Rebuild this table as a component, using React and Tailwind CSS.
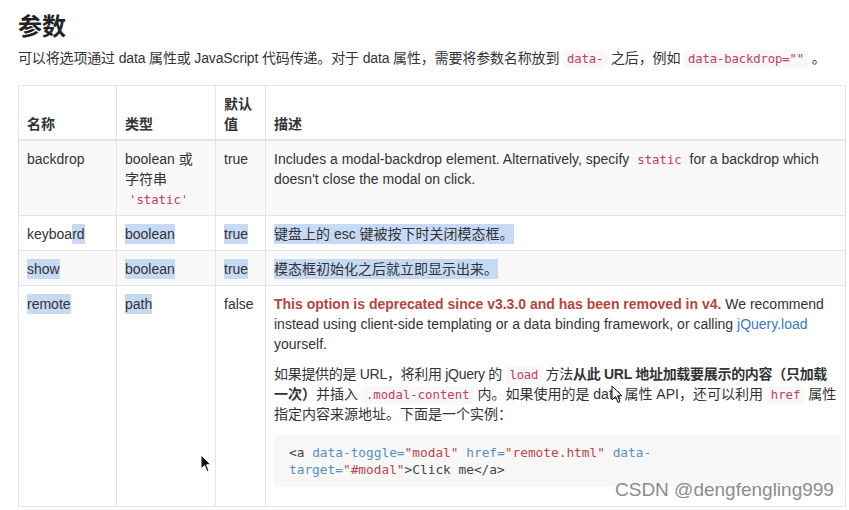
import React from 'react';

const sans = { fontFamily: '"Liberation Sans", "Noto Sans CJK SC", sans-serif' };
const mono = { fontFamily: '"DejaVu Sans Mono", "Liberation Mono", monospace' };

function Code({ children }) {
  return (
    <code style={mono} className="rounded-[3px] bg-[#f9f7f8] px-[4px] py-[2px] text-[12.3px] text-[#c2405e]">
      {children}
    </code>
  );
}

function Hl({ children }) {
  return <span className="bg-[#c6daf5] py-[2px]">{children}</span>;
}

// one text line with a fixed height, so fallback fonts can't grow the row
function Line({ children, className = '' }) {
  return <div className={`h-5 whitespace-nowrap ${className}`}>{children}</div>;
}

function Cursor({ className, filled }) {
  return (
    <svg className={className} width="12" height="19" viewBox="0 0 12 19">
      <path
        d="M1 1 L1 15 L4.5 11.5 L7 17.5 L9 16.6 L6.6 10.8 L11 10.8 Z"
        fill={filled ? '#111' : '#fff'}
        stroke={filled ? '#fff' : '#111'}
        strokeWidth="1"
        strokeLinejoin="round"
      />
    </svg>
  );
}

export default function App() {
  const td = 'border border-[#e4e4e4] px-2 pt-2 pb-[6px] align-top';
  const th = 'border border-[#e4e4e4] border-b-2 px-2 pt-2 pb-[5px] align-bottom text-left font-bold';
  const attr = 'text-[#5b8fbd]';
  const str = 'text-[#bd444c]';

  return (
    <div style={sans} className="relative h-[510px] w-[849px] overflow-hidden bg-white pl-[18px] text-[14px] leading-[20px] text-[#333]">
      <h2 className="mt-[13px] h-[28px] text-[24px] font-bold leading-[28px] text-[#222]">参数</h2>
      <Line className="mt-[7px] mb-[17px] tracking-[-0.15px]">
        可以将选项通过 data 属性或 JavaScript 代码传递。对于 data 属性，需要将参数名称放到 <Code>data-</Code> 之后，例如{' '}
        <Code>data-backdrop=""</Code> 。
      </Line>

      <table className="w-[828px] table-fixed border-collapse">
        <colgroup>
          <col className="w-[98px]" />
          <col className="w-[99px]" />
          <col className="w-[50px]" />
          <col />
        </colgroup>
        <thead>
          <tr>
            <th className={th}>
              <Line>名称</Line>
            </th>
            <th className={th}>
              <Line>类型</Line>
            </th>
            <th className={th}>
              <Line>默认</Line>
              <Line>值</Line>
            </th>
            <th className={th}>
              <Line>描述</Line>
            </th>
          </tr>
        </thead>
        <tbody>
          <tr className="bg-[#f9f9f9]">
            <td className={td}>
              <Line>backdrop</Line>
            </td>
            <td className={td}>
              <Line>boolean 或</Line>
              <Line>字符串</Line>
              <Line>
                <Code>'static'</Code>
              </Line>
            </td>
            <td className={td}>
              <Line>true</Line>
            </td>
            <td className={td}>
              <Line>
                Includes a modal-backdrop element. Alternatively, specify <Code>static</Code> for a backdrop which
              </Line>
              <Line>doesn't close the modal on click.</Line>
            </td>
          </tr>
          <tr>
            <td className={td}>
              <Line>
                keyboa<Hl>rd</Hl>
              </Line>
            </td>
            <td className={td}>
              <Line>
                <Hl>boolean</Hl>
              </Line>
            </td>
            <td className={td}>
              <Line>
                <Hl>true</Hl>
              </Line>
            </td>
            <td className={td}>
              <Line>
                <Hl>键盘上的 esc 键被按下时关闭模态框。</Hl>
              </Line>
            </td>
          </tr>
          <tr className="bg-[#f9f9f9]">
            <td className={td}>
              <Line>
                <Hl>show</Hl>
              </Line>
            </td>
            <td className={td}>
              <Line>
                <Hl>boolean</Hl>
              </Line>
            </td>
            <td className={td}>
              <Line>
                <Hl>true</Hl>
              </Line>
            </td>
            <td className={td}>
              <Line>
                <Hl>模态框初始化之后就立即显示出来。</Hl>
              </Line>
            </td>
          </tr>
          <tr>
            <td className={td}>
              <Line>
                <Hl>remote</Hl>
              </Line>
            </td>
            <td className={td}>
              <Line>
                <Hl>path</Hl>
              </Line>
            </td>
            <td className={td}>
              <Line>false</Line>
            </td>
            <td className={td}>
              <div className="mb-[10px]">
                <Line>
                  <strong className="text-[#b4453e]">
                    This option is deprecated since v3.3.0 and has been removed in v4.
                  </strong>{' '}
                  We recommend
                </Line>
                <Line>
                  instead using client-side templating or a data binding framework, or calling{' '}
                  <a className="text-[#3a7bc0]">jQuery.load</a>
                </Line>
                <Line>yourself.</Line>
              </div>
              <div className="mb-[11px]">
                <Line className="tracking-[-0.3px]">
                  如果提供的是 URL，将利用 jQuery 的 <Code>load</Code> 方法
                  <strong>从此 URL 地址加载要展示的内容（只加载</strong>
                </Line>
                <Line>
                  <strong>一次）</strong>并插入 <Code>.modal-content</Code> 内。如果使用的是 data 属性 API，还可以利用{' '}
                  <Code>href</Code> 属性
                </Line>
                <Line>指定内容来源地址。下面是一个实例：</Line>
              </div>
              <div
                style={mono}
                className="mb-[13px] mr-[-4px] rounded-[2px] bg-[#f7f7f8] px-[15px] py-[9px] text-[12.8px] text-[#444]"
              >
                <div className="h-[17px] whitespace-pre leading-[17px]">
                  <span>&lt;a </span>
                  <span className={attr}>data-toggle=</span>
                  <span className={str}>"modal"</span>
                  <span> </span>
                  <span className={attr}>href=</span>
                  <span className={str}>"remote.html"</span>
                  <span> </span>
                  <span className={attr}>data-</span>
                </div>
                <div className="h-[17px] whitespace-pre leading-[17px]">
                  <span className={attr}>target=</span>
                  <span className={str}>"#modal"</span>
                  <span>&gt;Click me&lt;/a&gt;</span>
                </div>
              </div>
            </td>
          </tr>
        </tbody>
      </table>

      <Cursor className="absolute left-[200px] top-[454px]" filled />
      <Cursor className="absolute left-[611px] top-[385px]" />

      <div
        style={{ fontFamily: '"Liberation Sans", sans-serif' }}
        className="absolute left-[615px] top-[479px] text-[19px] leading-[22px] text-[#8c8c8c]"
      >
        CSDN @dengfengling999
      </div>
    </div>
  );
}
